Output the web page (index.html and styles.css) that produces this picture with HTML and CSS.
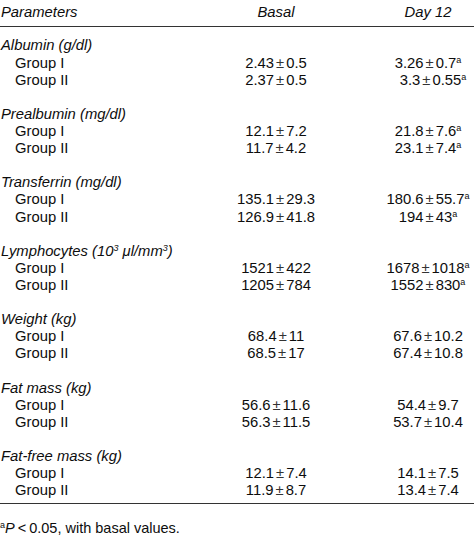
FILE: index.html
```html
<!DOCTYPE html>
<html lang="en">
<head>
<meta charset="utf-8">
<title>Parameters table</title>
<link rel="stylesheet" href="styles.css">
</head>
<body>
<div class="page">
  <div class="head">
    <div class="c-param">Parameters</div>
    <div class="c-basal">Basal</div>
    <div class="c-gap"></div>
    <div class="c-day">Day 12</div>
  </div>
  <div class="body">
    <div class="section">
      <div class="row"><div class="c-label">Albumin (g/dl)</div></div>
      <div class="row"><div class="c-group">Group I</div><div class="c-basal">2.43<span class="pm">±</span>0.5</div><div class="c-gap"></div><div class="c-day">3.26<span class="pm">±</span>0.7<sup class="sup">a</sup></div></div>
      <div class="row"><div class="c-group">Group II</div><div class="c-basal">2.37<span class="pm">±</span>0.5</div><div class="c-gap"></div><div class="c-day shift">3.3<span class="pm">±</span>0.55<sup class="sup">a</sup></div></div>
    </div>
    <div class="section">
      <div class="row"><div class="c-label">Prealbumin (mg/dl)</div></div>
      <div class="row"><div class="c-group">Group I</div><div class="c-basal">12.1<span class="pm">±</span>7.2</div><div class="c-gap"></div><div class="c-day">21.8<span class="pm">±</span>7.6<sup class="sup">a</sup></div></div>
      <div class="row"><div class="c-group">Group II</div><div class="c-basal">11.7<span class="pm">±</span>4.2</div><div class="c-gap"></div><div class="c-day">23.1<span class="pm">±</span>7.4<sup class="sup">a</sup></div></div>
    </div>
    <div class="section">
      <div class="row"><div class="c-label">Transferrin (mg/dl)</div></div>
      <div class="row"><div class="c-group">Group I</div><div class="c-basal">135.1<span class="pm">±</span>29.3</div><div class="c-gap"></div><div class="c-day">180.6<span class="pm">±</span>55.7<sup class="sup">a</sup></div></div>
      <div class="row"><div class="c-group">Group II</div><div class="c-basal">126.9<span class="pm">±</span>41.8</div><div class="c-gap"></div><div class="c-day">194<span class="pm">±</span>43<sup class="sup">a</sup></div></div>
    </div>
    <div class="section">
      <div class="row"><div class="c-label">Lymphocytes (10<sup class="sup3">3</sup> μl/mm<sup class="sup3">3</sup>)</div></div>
      <div class="row"><div class="c-group">Group I</div><div class="c-basal">1521<span class="pm">±</span>422</div><div class="c-gap"></div><div class="c-day">1678<span class="pm">±</span>1018<sup class="sup">a</sup></div></div>
      <div class="row"><div class="c-group">Group II</div><div class="c-basal">1205<span class="pm">±</span>784</div><div class="c-gap"></div><div class="c-day">1552<span class="pm">±</span>830<sup class="sup">a</sup></div></div>
    </div>
    <div class="section">
      <div class="row"><div class="c-label">Weight (kg)</div></div>
      <div class="row"><div class="c-group">Group I</div><div class="c-basal">68.4<span class="pm">±</span>11</div><div class="c-gap"></div><div class="c-day">67.6<span class="pm">±</span>10.2</div></div>
      <div class="row"><div class="c-group">Group II</div><div class="c-basal">68.5<span class="pm">±</span>17</div><div class="c-gap"></div><div class="c-day">67.4<span class="pm">±</span>10.8</div></div>
    </div>
    <div class="section">
      <div class="row"><div class="c-label">Fat mass (kg)</div></div>
      <div class="row"><div class="c-group">Group I</div><div class="c-basal">56.6<span class="pm">±</span>11.6</div><div class="c-gap"></div><div class="c-day">54.4<span class="pm">±</span>9.7</div></div>
      <div class="row"><div class="c-group">Group II</div><div class="c-basal">56.3<span class="pm">±</span>11.5</div><div class="c-gap"></div><div class="c-day">53.7<span class="pm">±</span>10.4</div></div>
    </div>
    <div class="section">
      <div class="row"><div class="c-label">Fat-free mass (kg)</div></div>
      <div class="row"><div class="c-group">Group I</div><div class="c-basal">12.1<span class="pm">±</span>7.4</div><div class="c-gap"></div><div class="c-day">14.1<span class="pm">±</span>7.5</div></div>
      <div class="row"><div class="c-group">Group II</div><div class="c-basal">11.9<span class="pm">±</span>8.7</div><div class="c-gap"></div><div class="c-day">13.4<span class="pm">±</span>7.4</div></div>
    </div>
  </div>
  <div class="note"><sup class="sup">a</sup><i>P</i><span class="lt">&lt;</span>0.05, with basal values.</div>
</div>
</body>
</html>
```
FILE: styles.css
```css
html, body {
  margin: 0;
  padding: 0;
  background: #ffffff;
}
.page {
  width: 474px;
  height: 550px;
  overflow: hidden;
  font-family: "Liberation Sans", Arial, sans-serif;
  font-size: 14.8px;
  line-height: 17.1px;
  color: #0d0d0d;
}
.head, .row {
  display: grid;
  grid-template-columns: 200px 152px 30px 92px;
  height: 17.1px;
  white-space: nowrap;
}
.head {
  padding-top: 4px;
  padding-bottom: 5px;
  border-bottom: 1.5px solid #333333;
  font-style: italic;
}
.c-param, .c-label {
  font-style: italic;
  padding-left: 1px;
}
.c-label {
  grid-column: 1 / 5;
}
.c-group {
  padding-left: 15px;
}
.c-basal, .c-day {
  text-align: center;
}
.shift {
  padding-left: 10px;
}
.body {
  padding-top: 10.4px;
  padding-bottom: 3.5px;
  border-bottom: 1.5px solid #333333;
  display: flex;
  flex-direction: column;
  gap: 17.15px;
}
.pm {
  margin: 0 2px;
  color: #333;
}
.sup {
  font-size: 9px;
  line-height: 0;
  vertical-align: 5px;
}
.sup3 {
  font-size: 9px;
  line-height: 0;
  vertical-align: 5px;
  font-style: italic;
}
.note {
  margin-top: 16px;
  font-size: 14.5px;
  line-height: 17px;
}
.lt {
  margin: 0 3px;
}
```
